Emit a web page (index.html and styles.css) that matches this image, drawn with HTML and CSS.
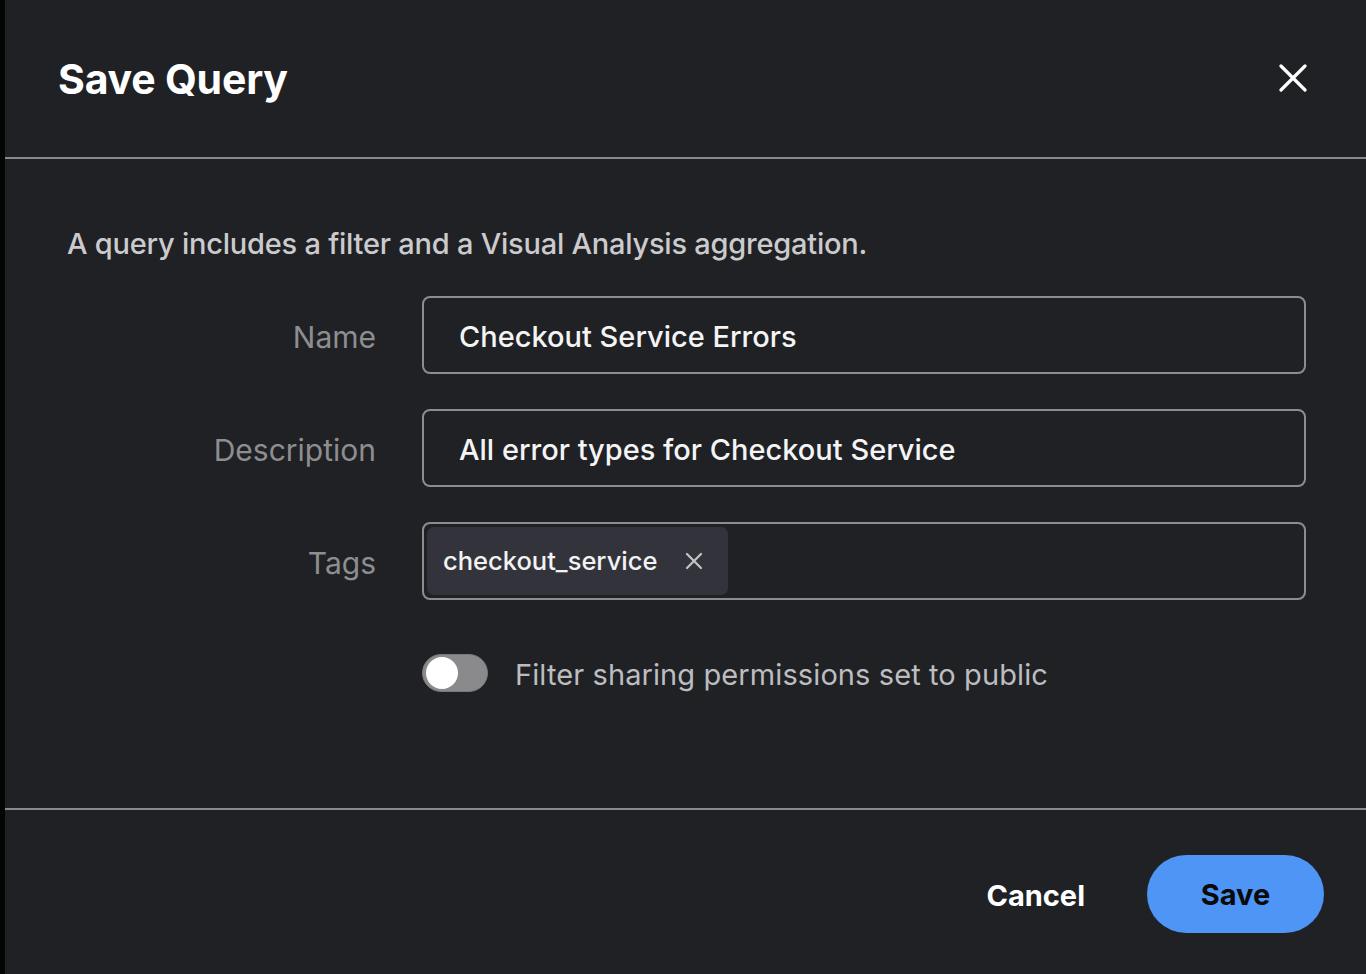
FILE: index.html
```html
<!DOCTYPE html>
<html lang="en">
<head>
<meta charset="utf-8">
<title>Save Query</title>
<link rel="stylesheet" href="styles.css">
</head>
<body>
<div class="modal">
  <header class="modal-header">
    <h1 class="modal-title">Save Query</h1>
    <button class="close-btn" aria-label="Close">
      <svg width="28" height="28" viewBox="0 0 28 28"><path d="M2 2 L26 26 M26 2 L2 26" stroke="#ffffff" stroke-width="3.2" stroke-linecap="round" fill="none"/></svg>
    </button>
  </header>
  <section class="modal-body">
    <p class="intro">A query includes a filter and a Visual Analysis aggregation.</p>
    <div class="form">
      <label class="label">Name</label>
      <div class="field"><span class="field-text">Checkout Service Errors</span></div>
      <label class="label">Description</label>
      <div class="field"><span class="field-text">All error types for Checkout Service</span></div>
      <label class="label">Tags</label>
      <div class="field field-tags">
        <span class="chip">
          <span class="chip-text">checkout_service</span>
          <svg class="chip-x" width="18" height="18" viewBox="0 0 18 18"><path d="M2 2 L16 16 M16 2 L2 16" stroke="#c4c4c7" stroke-width="2.2" stroke-linecap="round" fill="none"/></svg>
        </span>
      </div>
      <div class="toggle-row">
        <span class="toggle"><span class="knob"></span></span>
        <span class="toggle-text">Filter sharing permissions set to public</span>
      </div>
    </div>
  </section>
  <footer class="modal-footer">
    <button class="btn-cancel">Cancel</button>
    <button class="btn-save">Save</button>
  </footer>
</div>
</body>
</html>
```

FILE: styles.css
```css
* { box-sizing: border-box; }
html, body { margin: 0; padding: 0; height: 100%; }
body {
  background: #050505;
  font-family: Inter, "Noto Sans", "Liberation Sans", sans-serif;
  overflow: hidden;
}
.modal {
  margin-left: 5px;
  height: 974px;
  background: #202125;
  display: flex;
  flex-direction: column;
}
.modal-header {
  height: 159px;
  border-bottom: 2px solid #8a8a8d;
  display: flex;
  align-items: center;
  justify-content: space-between;
  padding: 0 59px 0 53px;
}
.modal-title {
  margin: 0;
  font-size: 41px;
  line-height: 48px;
  font-weight: 700;
  color: #ffffff;
  letter-spacing: -0.2px;
}
.close-btn {
  background: none;
  border: 0;
  padding: 0;
  width: 28px;
  height: 28px;
  margin-bottom: 2px;
  cursor: pointer;
  display: flex;
}
.modal-body {
  height: 651px;
  border-bottom: 2px solid #8a8a8d;
  padding: 68px 0 0 62px;
}
.intro {
  margin: 0 0 35px 0;
  font-size: 29px;
  line-height: 34px;
  color: #cbcbce;
  font-weight: 450;
  letter-spacing: -0.23px;
}
.form {
  display: grid;
  grid-template-columns: 309px 884px;
  column-gap: 46px;
  row-gap: 35px;
  align-items: center;
}
.label {
  text-align: right;
  font-size: 30px;
  color: #8e8e91;
  padding-top: 3px;
}
.field {
  height: 78px;
  border: 2px solid #8d8d90;
  border-radius: 8px;
  display: flex;
  align-items: center;
  padding-left: 35px;
  padding-top: 3px;
}
.field-text {
  font-size: 29px;
  font-weight: 500;
  color: #f4f4f5;
}
.field-tags {
  padding: 3px;
  align-items: stretch;
}
.chip {
  background: #33343b;
  border-radius: 7px;
  display: flex;
  align-items: center;
  padding: 0 25px 0 16px;
  gap: 28px;
}
.chip-text {
  font-size: 25.5px;
  font-weight: 500;
  color: #f2f2f3;
  padding-bottom: 2px;
}
.toggle-row {
  grid-column: 2;
  margin-top: 19px;
  display: flex;
  align-items: center;
  gap: 27px;
}
.toggle {
  width: 66px;
  height: 38px;
  border-radius: 19px;
  background: #8a8a8c;
  border: 1px solid #7a7a7c;
  display: flex;
  align-items: center;
  padding-left: 3px;
}
.knob {
  width: 32px;
  height: 32px;
  border-radius: 50%;
  background: #ffffff;
}
.toggle-text {
  font-size: 29px;
  color: #bdbdc0;
  letter-spacing: 0.1px;
  padding-top: 3px;
}
.modal-footer {
  flex: 1;
  display: flex;
  justify-content: flex-end;
  align-items: flex-start;
  padding: 45px 42px 0 0;
  gap: 62px;
}
.btn-cancel {
  background: none;
  border: 0;
  padding: 2px 0 0 0;
  height: 78px;
  font-family: inherit;
  font-size: 29px;
  font-weight: 700;
  color: #ffffff;
}
.btn-save {
  width: 177px;
  height: 78px;
  border: 0;
  border-radius: 39px;
  background: #4e95f5;
  font-family: inherit;
  font-size: 29px;
  font-weight: 700;
  color: #0a0a0a;
  padding-top: 2px;
}
```
